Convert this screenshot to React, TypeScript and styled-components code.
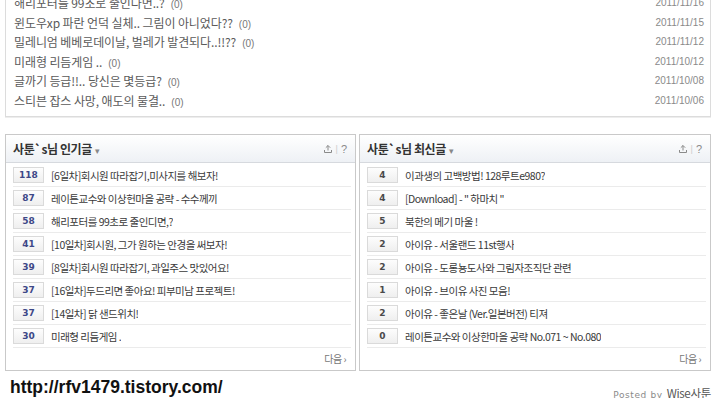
import { FunctionComponent } from "react";
import styled, { createGlobalStyle } from "styled-components";

const recent = [
  { title: "해리포터를 99초로 줄인다면..?", date: "2011/11/16" },
  { title: "윈도우xp 파란 언덕 실체.. 그림이 아니었다??", date: "2011/11/15" },
  { title: "밀레니엄 베베로데이날, 벌레가 발견되다..!!??", date: "2011/11/12" },
  { title: "미래형 리듬게임 ..", date: "2011/10/12" },
  { title: "글까기 등급!!.. 당신은 몇등급?", date: "2011/10/08" },
  { title: "스티븐 잡스 사망, 애도의 물결..", date: "2011/10/06" },
];

const popular = [
  { n: 118, t: "[6일차]회시원 따라잡기,미사지를 해보자!" },
  { n: 87, t: "레이튼교수와 이상헌마을 공략 - 수수께끼" },
  { n: 58, t: "해리포터를 99초로 줄인디면,?" },
  { n: 41, t: "[10일차]회시원, 그가 원하는 안경을 써보자!" },
  { n: 39, t: "[8일차]회시원 따라잡기, 과일주스 맛있어요!" },
  { n: 37, t: "[16일차]두드리면 좋아요! 피부미남 프로젝트!" },
  { n: 37, t: "[14일차] 닭 샌드위치!" },
  { n: 30, t: "미래형 리듬게임 ." },
];

const latest = [
  { n: 4, t: "이과생의 고백방법! 128루트e980?" },
  { n: 4, t: "[Download] - \" 하마치 \"" },
  { n: 5, t: "북한의 메기 마울 !" },
  { n: 2, t: "아이유 - 서울랜드 11st행사" },
  { n: 2, t: "아이유 - 도롱뇽도사와 그림자조직단 관련" },
  { n: 1, t: "아이유 - 브이유 사진 모음!" },
  { n: 2, t: "아이유 - 좋은날 (Ver.일본버전) 티져" },
  { n: 0, t: "레이튼교수와 이상한마을 공략 No.071 ~ No.080" },
];

const GlobalStyle = createGlobalStyle`
  body {
    margin: 0;
    background: #fff;
    overflow: hidden;
    font-family: "Noto Sans CJK KR", "Noto Sans", sans-serif;
  }
`;

const UploadIcon = () => (
  <svg width="10" height="10" viewBox="0 0 10 10" fill="none" stroke="#8a8a8a" strokeWidth="1">
    <path d="M5 1.5V6.5M2.8 3.7L5 1.5L7.2 3.7M1.5 6V8.5H8.5V6" />
  </svg>
);

type Item = { n: number; t: string };

const RankPanel: FunctionComponent<{ title: string; items: Item[]; numColor: string }> = ({
  title,
  items,
  numColor,
}) => (
  <Panel>
    <PanelHeader>
      <PanelTitle>
        {title}
        <Caret>▾</Caret>
      </PanelTitle>
      <HeaderTools>
        <UploadIcon />
        <ToolSep>|</ToolSep>
        <Help>?</Help>
      </HeaderTools>
    </PanelHeader>
    <List>
      {items.map((it, i) => (
        <Row key={i}>
          <Badge $color={numColor}>{it.n}</Badge>
          <RowText>{it.t}</RowText>
        </Row>
      ))}
    </List>
    <PanelFooter>다음 ›</PanelFooter>
  </Panel>
);

const App = () => (
  <>
    <GlobalStyle />
    <Page>
      <TopPanel>
        {recent.map((r) => (
          <TopRow key={r.date}>
            <TopTitle>
              {r.title}
              <Count>(0)</Count>
            </TopTitle>
            <DateText>{r.date}</DateText>
          </TopRow>
        ))}
      </TopPanel>
      <Panels>
        <RankPanel title="사툰`s님 인기글" items={popular} numColor="#3d4887" />
        <RankPanel title="사툰`s님 최신글" items={latest} numColor="#4a4a4a" />
      </Panels>
      <Bottom>
        <Url>http://rfv1479.tistory.com/</Url>
        <Posted>
          <PostedBy>Posted by</PostedBy>
          <Author>Wise사툰</Author>
        </Posted>
      </Bottom>
    </Page>
  </>
);

export default App;

const Page = styled.div`
  width: 706px;
  padding-left: 5px;
`;

const TopPanel = styled.div`
  margin-top: -14px;
  border: 1px solid #dcdcdc;
  box-shadow: 0 1px 0 #ededed;
  padding: 6px 6px 6px 8px;
`;

const TopRow = styled.div`
  display: flex;
  align-items: center;
  justify-content: space-between;
  height: 19.5px;
`;

const TopTitle = styled.div`
  font-size: 12px;
  letter-spacing: -0.1px;
  color: #5a5a5a;
  white-space: nowrap;
`;

const Count = styled.span`
  font-family: "Liberation Sans", sans-serif;
  font-size: 10px;
  letter-spacing: 0;
  color: #777;
  margin-left: 6px;
`;

const DateText = styled.span`
  font-family: "Liberation Sans", sans-serif;
  font-size: 10px;
  color: #8a8a8a;
`;

const Panels = styled.div`
  display: grid;
  grid-template-columns: 351px 352px;
  gap: 3px;
  margin-top: 17px;
`;

const Panel = styled.div`
  border: 1px solid #c9c9c9;
  height: 235px;
  display: flex;
  flex-direction: column;
`;

const PanelHeader = styled.div`
  height: 27px;
  border-bottom: 1px solid #d6d9de;
  background: linear-gradient(#ffffff, #eef1f5);
  display: flex;
  align-items: center;
  justify-content: space-between;
  padding: 0 8px 0 7px;
`;

const PanelTitle = styled.div`
  font-size: 12px;
  font-weight: bold;
  color: #333;
  letter-spacing: -0.4px;
`;

const Caret = styled.span`
  font-size: 9px;
  color: #888;
  margin-left: 3px;
  font-weight: normal;
`;

const HeaderTools = styled.div`
  display: flex;
  align-items: center;
  gap: 3px;
  font-family: "Liberation Sans", sans-serif;
  font-size: 10px;
  color: #8a8a8a;
`;

const ToolSep = styled.span`
  color: #ccc;
  font-size: 9px;
`;

const Help = styled.span`
  font-size: 11px;
`;

const List = styled.div`
  padding: 1px 4px 0 7px;
`;

const Row = styled.div`
  height: 22px;
  border-bottom: 1px solid #ebebeb;
  display: flex;
  align-items: center;
  gap: 7px;
`;

const Badge = styled.span<{ $color: string }>`
  width: 29px;
  height: 14px;
  border: 1px solid #dadada;
  background: linear-gradient(#fdfdfd, #efefef);
  display: flex;
  align-items: center;
  justify-content: center;
  font-family: "DejaVu Sans", sans-serif;
  font-size: 9px;
  font-weight: bold;
  color: ${(p) => p.$color};
`;

const RowText = styled.span`
  font-size: 10.5px;
  letter-spacing: -0.5px;
  color: #3a3a3a;
  white-space: nowrap;
  overflow: hidden;
`;

const PanelFooter = styled.div`
  text-align: right;
  padding: 3px 9px 0 0;
  font-size: 10px;
  color: #777;
  letter-spacing: -0.5px;
`;

const Bottom = styled.div`
  display: flex;
  justify-content: space-between;
  align-items: flex-end;
  padding: 6px 0 0 5px;
`;

const Url = styled.div`
  font-family: "Liberation Sans", sans-serif;
  font-weight: bold;
  font-size: 17.5px;
  color: #111;
`;

const Posted = styled.div`
  display: flex;
  align-items: baseline;
  gap: 4px;
  margin-bottom: -3px;
`;

const PostedBy = styled.span`
  font-family: "DejaVu Sans", sans-serif;
  font-size: 9px;
  letter-spacing: 0.6px;
  color: #8a8a8a;
`;

const Author = styled.span`
  font-size: 11.5px;
  color: #555;
  letter-spacing: -0.3px;
`;
